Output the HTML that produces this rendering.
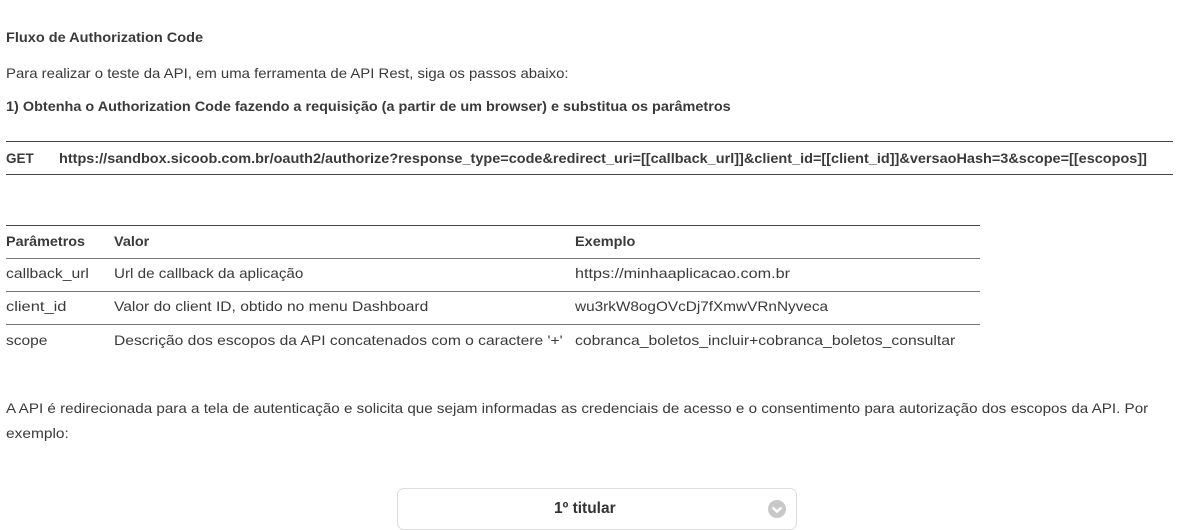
<!DOCTYPE html>
<html><head><meta charset="utf-8"><style>
body{margin:0;width:1188px;height:516px;background:#fff;position:relative;overflow:hidden;font-family:"Liberation Sans",sans-serif;color:#3a3a3a;font-size:14px}
.t{position:absolute;white-space:nowrap;transform-origin:0 50%;line-height:16px}
.b{font-weight:bold;color:#3a3a3a}
.l{position:absolute;height:1px;background:#444}
</style></head><body>
<div class="t b" style="left:6px;top:29px" w="197">Fluxo de Authorization Code</div>
<div class="t" style="left:6px;top:65px" w="563">Para realizar o teste da API, em uma ferramenta de API Rest, siga os passos abaixo:</div>
<div class="t b" style="left:6px;top:98px" w="725">1) Obtenha o Authorization Code fazendo a requisição (a partir de um browser) e substitua os parâmetros</div>
<div class="l" style="left:6px;top:141px;width:1167px"></div>
<div class="t b" style="left:6px;top:150px" w="28">GET</div>
<div class="t b" style="left:59px;top:150px" w="1088">https://sandbox.sicoob.com.br/oauth2/authorize?response_type=code&amp;redirect_uri=[[callback_url]]&amp;client_id=[[client_id]]&amp;versaoHash=3&amp;scope=[[escopos]]</div>
<div class="l" style="left:6px;top:174px;width:1167px"></div>

<div class="l" style="left:6px;top:225px;width:974px"></div>
<div class="t b" style="left:6px;top:233px" w="79">Parâmetros</div>
<div class="t b" style="left:114px;top:233px" w="35">Valor</div>
<div class="t b" style="left:575px;top:233px" w="60">Exemplo</div>
<div class="l" style="left:6px;top:258px;width:974px;background:#777"></div>
<div class="t" style="left:6px;top:265px" w="83">callback_url</div>
<div class="t" style="left:114px;top:265px" w="189">Url de callback da aplicação</div>
<div class="t" style="left:575px;top:265px" w="215">https://minhaaplicacao.com.br</div>
<div class="l" style="left:6px;top:291px;width:974px;background:#777"></div>
<div class="t" style="left:6px;top:298px" w="60">client_id</div>
<div class="t" style="left:114px;top:298px" w="314">Valor do client ID, obtido no menu Dashboard</div>
<div class="t" style="left:575px;top:298px" w="253">wu3rkW8ogOVcDj7fXmwVRnNyveca</div>
<div class="l" style="left:6px;top:324px;width:974px;background:#777"></div>
<div class="t" style="left:6px;top:332px" w="41">scope</div>
<div class="t" style="left:114px;top:332px" w="449">Descrição dos escopos da API concatenados com o caractere '+'</div>
<div class="t" style="left:575px;top:332px" w="380">cobranca_boletos_incluir+cobranca_boletos_consultar</div>

<div class="t" style="left:6px;top:400px" w="1142">A API é redirecionada para a tela de autenticação e solicita que sejam informadas as credenciais de acesso e o consentimento para autorização dos escopos da API. Por</div>
<div class="t" style="left:6px;top:425px" w="63">exemplo:</div>

<div style="position:absolute;left:397px;top:488px;width:398px;height:40px;border:1px solid #ddd;border-radius:7px;background:#fff"></div>
<div class="t" style="left:554px;top:501px;font-weight:bold;font-size:16px;color:#333" w="62">1º titular</div>
<svg style="position:absolute;left:767px;top:499px" width="20" height="20" viewBox="0 0 20 20"><circle cx="10" cy="10" r="9" fill="#c8c8c8"/><path d="M5.5 8.5 L10 12.5 L14.5 8.5" stroke="#fff" stroke-width="2.4" fill="none"/></svg>
<script>
document.querySelectorAll('.t').forEach(function(e){var w=+e.getAttribute('w');if(w&&e.offsetWidth)e.style.transform='scaleX('+(w/e.offsetWidth)+')';});
</script>
</body></html>
